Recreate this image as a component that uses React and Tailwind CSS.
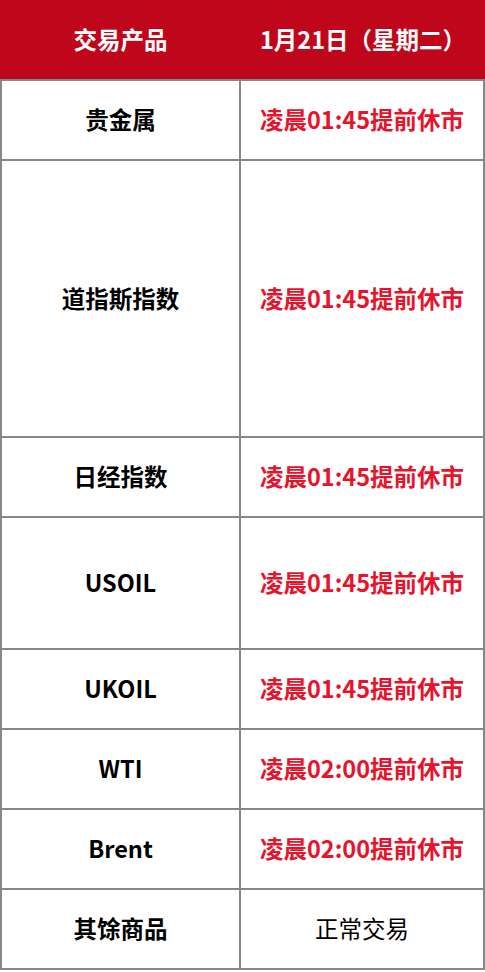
import React from 'react';

const rows = [
    { name: '贵金属', time: '凌晨01:45提前休市', h: 'h-[80px]', w: 'font-bold' },
    { name: '道指斯指数', time: '凌晨01:45提前休市', h: 'h-[277px]', w: 'font-bold' },
    { name: '日经指数', time: '凌晨01:45提前休市', h: 'h-[80px]', w: 'font-bold' },
    { name: 'USOIL', time: '凌晨01:45提前休市', h: 'h-[132px]', w: 'font-semibold' },
    { name: 'UKOIL', time: '凌晨01:45提前休市', h: 'h-[80px]', w: 'font-semibold' },
    { name: 'WTI', time: '凌晨02:00提前休市', h: 'h-[80px]', w: 'font-semibold' },
    { name: 'Brent', time: '凌晨02:00提前休市', h: 'h-[80px]', w: 'font-semibold' },
];

const font = { fontFamily: '"Noto Sans CJK SC", "Noto Sans", sans-serif' };

const App = () => {
    return (
        <div className='w-[485px] bg-white text-[23.5px] leading-none' style={font}>
            <div className='flex h-[79px] bg-[#c0061b] text-white font-bold'>
                <div className='w-[241px] flex items-center justify-center'>交易产品</div>
                <div className='flex-1 flex items-center justify-center'>1月21日（星期二）</div>
            </div>
            <div className='border-2 border-[#878787]'>
                {rows.map((r) => (
                    <div key={r.name} className={`flex border-b-2 border-[#878787] ${r.h}`}>
                        <div className={`w-[239px] border-r-2 border-[#878787] flex items-center justify-center text-black ${r.w}`}>
                            {r.name}
                        </div>
                        <div className='flex-1 flex items-center justify-center font-bold text-[#e8132b]'>
                            {r.time}
                        </div>
                    </div>
                ))}
                <div className='flex h-[78px]'>
                    <div className='w-[239px] border-r-2 border-[#878787] flex items-center justify-center font-bold text-black'>
                        其馀商品
                    </div>
                    <div className='flex-1 flex items-center justify-center text-black'>正常交易</div>
                </div>
            </div>
        </div>
    );
};

export default App;
